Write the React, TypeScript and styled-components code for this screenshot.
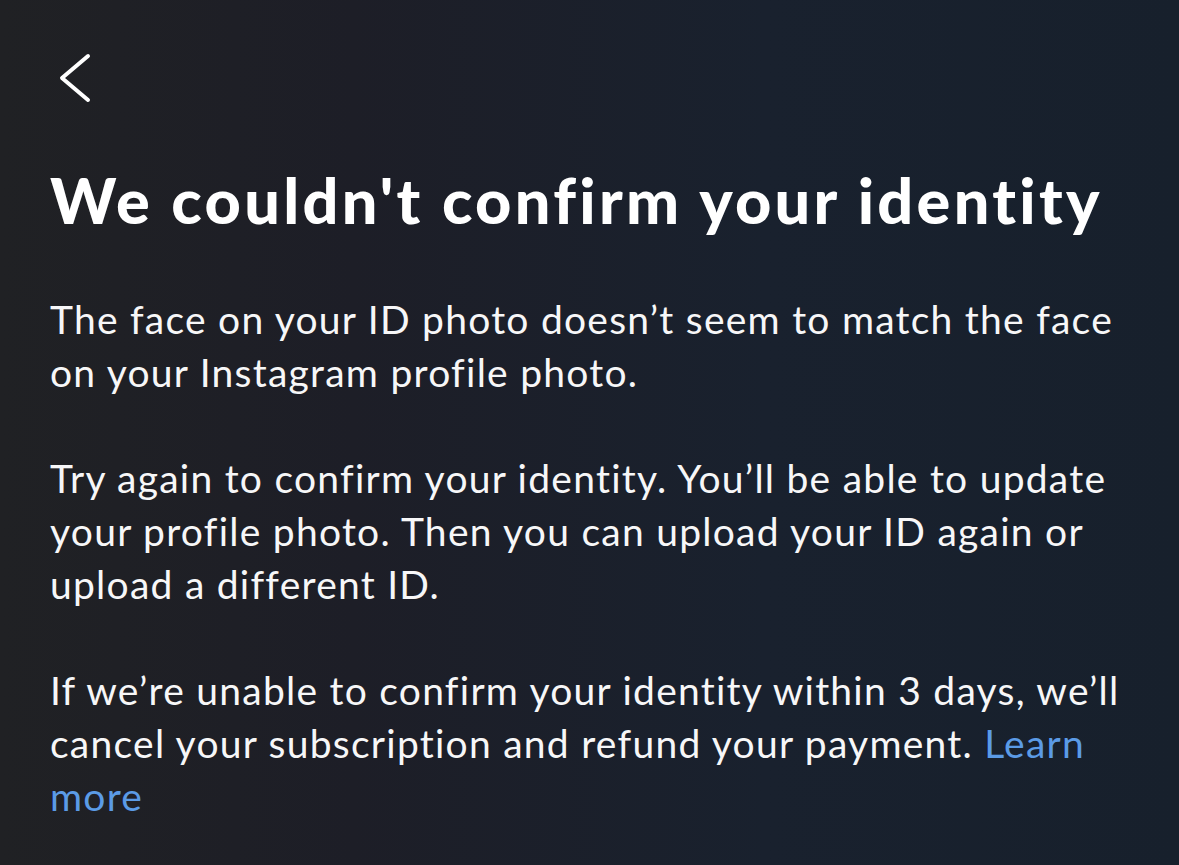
import React from "react";
import styled, { createGlobalStyle } from "styled-components";

const Global = createGlobalStyle`
  html, body { margin: 0; padding: 0; background: #1b1f26; }
  #root { min-height: 865px; }
`;

const Screen = styled.div`
  width: 1179px;
  height: 865px;
  box-sizing: border-box;
  overflow: hidden;
  background: linear-gradient(90deg, #202124 0%, #1d1e27 30%, #19212e 65%, #17202c 100%);
  font-family: Lato, "Open Sans", sans-serif;
  font-variant-ligatures: none;
  color: #f7f7f8;
  display: flex;
  flex-direction: column;
  padding: 52px 0 0 50px;
`;

const BackButton = styled.button`
  width: 50px;
  height: 52px;
  padding: 0;
  margin: 0 0 0 9px;
  border: none;
  background: transparent;
  display: flex;
  align-items: center;
  justify-content: flex-start;
  cursor: pointer;
`;

const Title = styled.h1`
  margin: 59px 0 0 0;
  font-size: 63px;
  line-height: 74px;
  font-weight: 900;
  letter-spacing: 3.3px;
  color: #ffffff;
  white-space: nowrap;
`;

const Body = styled.div`
  margin-top: 56px;
  display: flex;
  flex-direction: column;
  gap: 53px;
`;

const Para = styled.p`
  margin: 0;
  font-size: 39px;
  line-height: 53px;
  font-weight: 400;
  letter-spacing: 1.25px;
  white-space: nowrap;
`;

const Link = styled.a`
  color: #5b9be6;
  text-decoration: none;
`;

export default function App() {
  return (
    <>
      <Global />
      <Screen>
        <BackButton aria-label="Back">
          <svg width="32" height="50" viewBox="0 0 32 50" fill="none">
            <path d="M29 3 L3 25 L29 47" stroke="#fff" strokeWidth="4" strokeLinecap="round" strokeLinejoin="round" />
          </svg>
        </BackButton>
        <Title>We couldn't confirm your identity</Title>
        <Body>
          <Para>
            The face on your ID photo doesn’t seem to match the face
            <br />
            on your Instagram profile photo.
          </Para>
          <Para>
            Try again to confirm your identity. You’ll be able to update
            <br />
            your profile photo. Then you can upload your ID again or
            <br />
            upload a different ID.
          </Para>
          <Para>
            If we’re unable to confirm your identity within 3 days, we’ll
            <br />
            cancel your subscription and refund your payment. <Link href="#">Learn</Link>
            <br />
            <Link href="#">more</Link>
          </Para>
        </Body>
      </Screen>
    </>
  );
}
